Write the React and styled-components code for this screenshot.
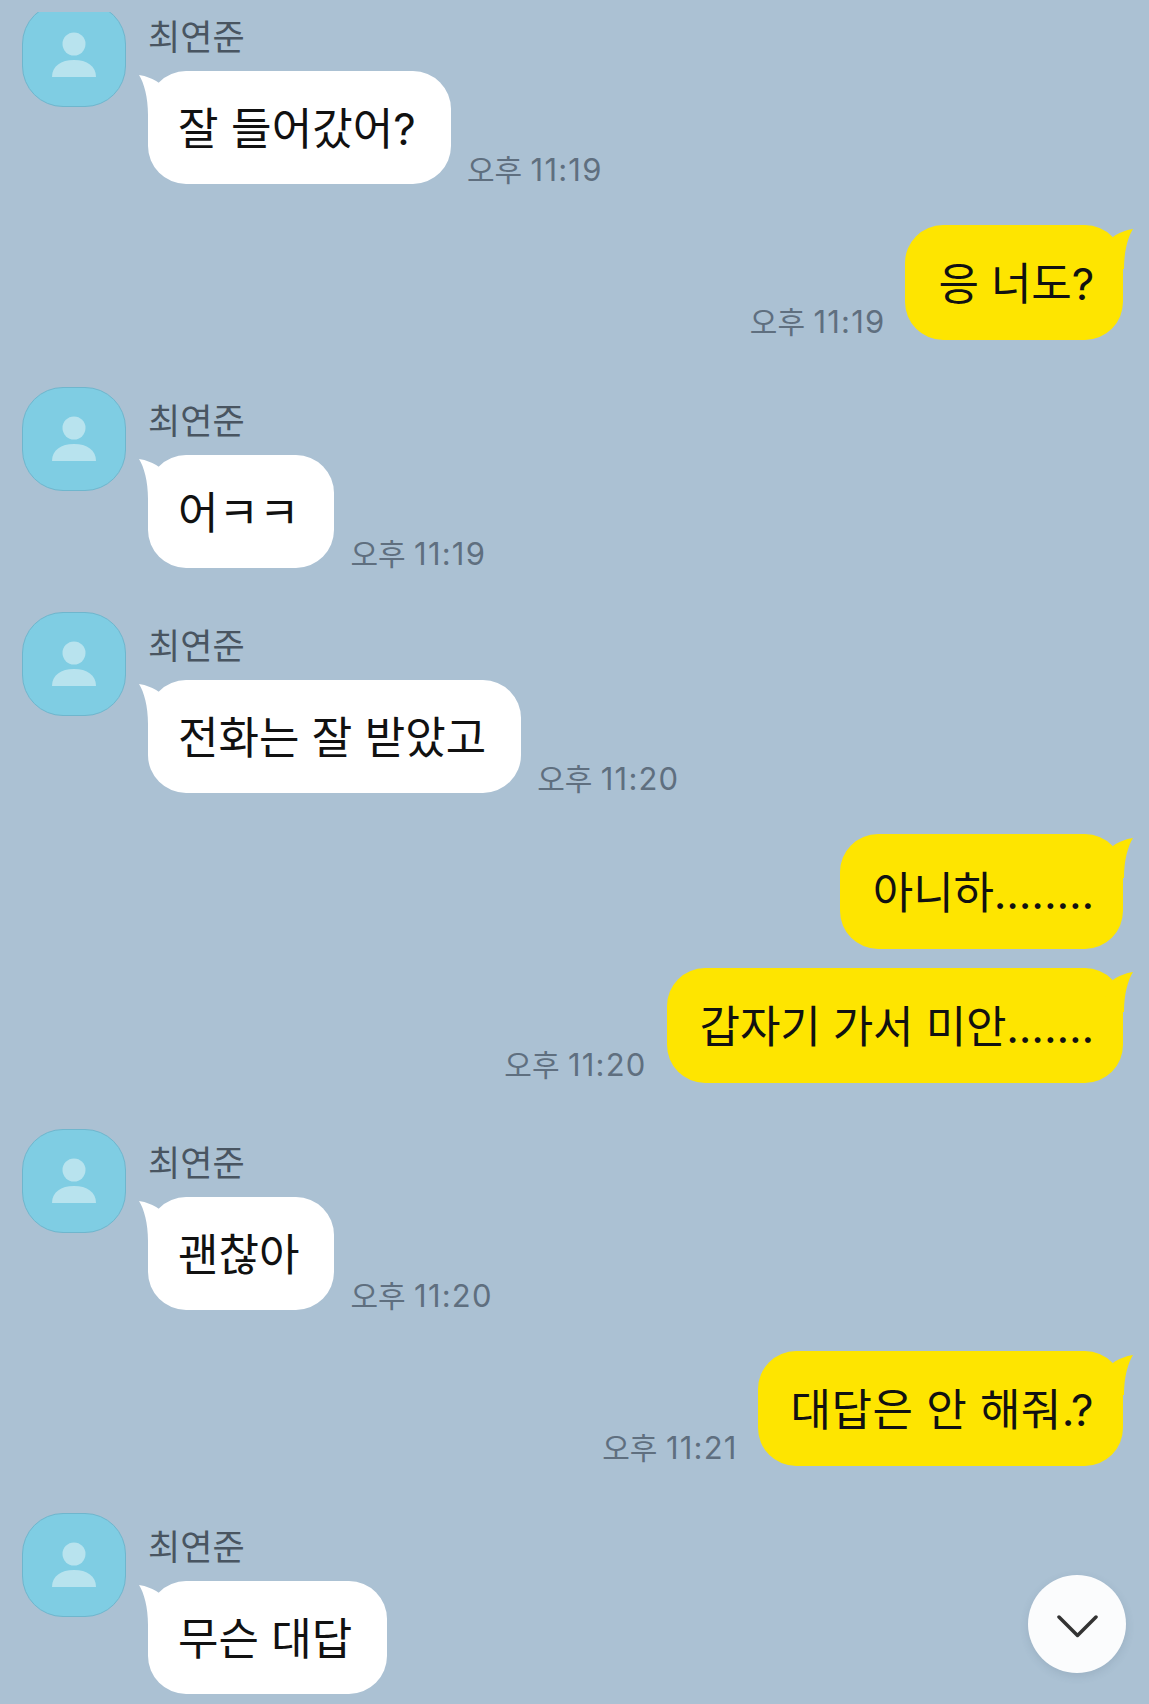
import React from 'react'
import styled, { createGlobalStyle } from 'styled-components'

const GlobalStyle = createGlobalStyle`
  html, body {
    margin: 0;
    padding: 0;
    background: #abc1d3;
  }
  body {
    font-family: Inter, "Noto Sans CJK KR", "Noto Sans", sans-serif;
  }
`

const Screen = styled.div`
  position: relative;
  width: 1149px;
  height: 1704px;
  overflow: hidden;
  background: #abc1d3;
  padding-top: 12px;
  box-sizing: border-box;
`

const Scroller = styled.div`
  height: 1692px;
  overflow: hidden;
`

const List = styled.div`
  display: flex;
  flex-direction: column;
  margin-top: -9px;
  padding: 0 26px 0 22px;
`

const Incoming = styled.div`
  display: flex;
  gap: 22px;
  margin-top: ${p => p.$top || 0}px;
`

const Outgoing = styled.div`
  display: flex;
  justify-content: flex-end;
  align-items: flex-end;
  gap: 20px;
  margin-top: ${p => p.$top || 0}px;
`

const Avatar = styled.div`
  flex: none;
  width: 104px;
  height: 104px;
  border-radius: 41px;
  background: #7fcde3;
  border: 1px solid #6fb6cd;
  box-sizing: border-box;
  display: flex;
  align-items: center;
  justify-content: center;
`

const Body = styled.div`
  display: flex;
  flex-direction: column;
`

const Name = styled.div`
  height: 68px;
  line-height: 68px;
  font-size: 35px;
  color: #495561;
`

const Line = styled.div`
  display: flex;
  align-items: flex-end;
  gap: 16px;
`

const Bubble = styled.div`
  position: relative;
  height: ${p => (p.$mine ? 115 : 113)}px;
  line-height: ${p => (p.$mine ? 118 : 117)}px;
  padding: ${p => (p.$mine ? '0 29px 0 33px' : '0 35px 0 30px')};
  box-sizing: border-box;
  border-radius: 38px;
  background: ${p => (p.$mine ? '#fee500' : '#ffffff')};
  color: #111;
  font-size: 44px;
  letter-spacing: ${p => p.$spacing || 0}px;
  white-space: nowrap;
`

const BubbleText = styled.span`
  position: relative;
`

const Tail = styled.svg`
  position: absolute;
  top: 4px;
  ${p => (p.$mine ? 'right: -10px;' : 'left: -9px;')}
  width: 36px;
  height: 40px;
`

const Time = styled.div`
  font-size: 30px;
  line-height: 34px;
  color: #5f6f7f;
  white-space: nowrap;
  margin-bottom: ${p => (p.$mine ? 1 : -3)}px;
`

const Clock = styled.span`
  font-size: 31px;
  letter-spacing: 1.2px;
`

const DownButton = styled.div`
  position: absolute;
  left: 1028px;
  top: 1575px;
  width: 98px;
  height: 98px;
  border-radius: 50%;
  background: #fbfcfd;
  box-shadow: 0 3px 8px rgba(70, 90, 110, 0.15);
  display: flex;
  align-items: center;
  justify-content: center;
`

const Chevron = styled.svg`
  width: 41px;
  height: 24px;
  margin-top: 5px;
`

const PersonIcon = () => (
  <svg width="44" height="46" viewBox="0 0 44 46">
    <circle cx="22" cy="12" r="11.5" fill="#b8e3ee" />
    <path d="M0 45c0-11 9-17 22-17s22 6 22 17z" fill="#b8e3ee" />
  </svg>
)

const IncomingTail = () => (
  <Tail viewBox="0 0 36 40">
    <path d="M0 0C7 1 15 4 20 8L34 40H9C9 22 5 8 0 0Z" fill="#ffffff" />
  </Tail>
)

const OutgoingTail = () => (
  <Tail $mine viewBox="0 0 36 40">
    <path d="M36 0C29 1 21 4 16 8L2 40H27C27 22 31 8 36 0Z" fill="#fee500" />
  </Tail>
)

const TimeLabel = ({ value, mine }) => {
  const [period, clock] = value.split(' ')
  return (
    <Time $mine={mine}>
      {period} <Clock>{clock}</Clock>
    </Time>
  )
}

const messages = [
  { from: 'them', top: 0, text: '잘 들어갔어?', time: '오후 11:19', spacing: 0.1 },
  { from: 'me', top: 41, text: '응 너도?', time: '오후 11:19', spacing: -0.15 },
  { from: 'them', top: 47, text: '어ㅋㅋ', time: '오후 11:19' },
  { from: 'them', top: 44, text: '전화는 잘 받았고', time: '오후 11:20' },
  { from: 'me', top: 41, text: '아니하........', spacing: -0.15 },
  { from: 'me', top: 19, text: '갑자기 가서 미안.......', time: '오후 11:20', spacing: -0.15 },
  { from: 'them', top: 46, text: '괜찮아', time: '오후 11:20' },
  { from: 'me', top: 41, text: '대답은 안 해줘.?', time: '오후 11:21', spacing: 0.45 },
  { from: 'them', top: 47, text: '무슨 대답' },
]

export default function App() {
  return (
    <Screen>
      <GlobalStyle />
      <Scroller>
        <List>
          {messages.map((m, i) =>
            m.from === 'them' ? (
              <Incoming key={i} $top={m.top}>
                <Avatar>
                  <PersonIcon />
                </Avatar>
                <Body>
                  <Name>최연준</Name>
                  <Line>
                    <Bubble $spacing={m.spacing}>
                      <IncomingTail />
                      <BubbleText>{m.text}</BubbleText>
                    </Bubble>
                    {m.time && <TimeLabel value={m.time} />}
                  </Line>
                </Body>
              </Incoming>
            ) : (
              <Outgoing key={i} $top={m.top}>
                {m.time && <TimeLabel value={m.time} mine />}
                <Bubble $mine $spacing={m.spacing}>
                  <OutgoingTail />
                  <BubbleText>{m.text}</BubbleText>
                </Bubble>
              </Outgoing>
            )
          )}
        </List>
      </Scroller>
      <DownButton>
        <Chevron viewBox="0 0 41 24">
          <path d="M2 2l18.5 18.5L39 2" fill="none" stroke="#333" strokeWidth="3.5" strokeLinecap="round" strokeLinejoin="round" />
        </Chevron>
      </DownButton>
    </Screen>
  )
}
